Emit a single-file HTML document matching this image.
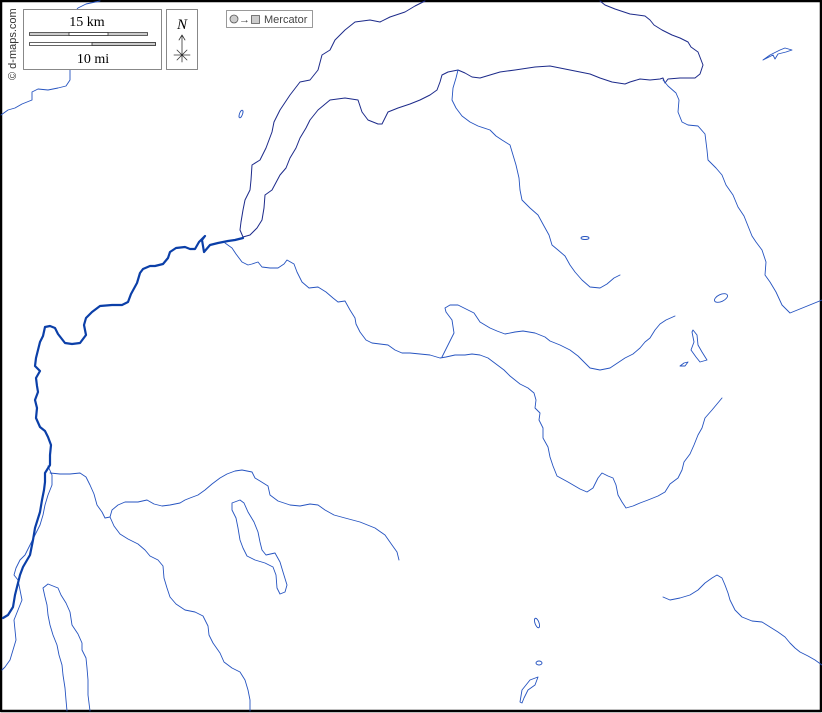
<!DOCTYPE html>
<html><head><meta charset="utf-8"><style>
html,body{margin:0;padding:0;background:#fff}
body{width:822px;height:713px;overflow:hidden;position:relative}
svg{position:absolute;left:0;top:0}
</style></head><body>
<svg width="822" height="713" viewBox="0 0 822 713" xmlns="http://www.w3.org/2000/svg" fill="none" stroke-linejoin="round" stroke-linecap="round">
<rect x="1" y="1" width="820" height="710" fill="#fff" stroke="#000" stroke-width="2.5"/>
<!-- lake outlines -->
<g stroke="#1c2a8a" stroke-width="1">
<path d="M425,1 L415,6 405,12 390,17 380,22 370,20 355,22 345,30 335,40 330,50 322,55 318,70 310,80 300,82 290,95 280,110 274,122 272,132 266,148 260,160 252,165 251,180 250,190 245,200 243,210 241,222 240,230 243,237"/>
<path d="M243,237 L250,235 257,228 262,220 264,208 265,195 272,190 280,175 286,168 290,158 296,148 300,138 306,128 310,120 318,110 330,100 345,98 358,100 362,112 368,120 378,124 382,124 388,112 398,108 410,104 420,100 430,95 437,90 440,82 442,75 448,72 458,70 465,73 472,77 480,78 490,75 500,72 515,70 535,67 550,66 560,68 570,70 580,72 590,74 600,78 612,82 625,84 630,82 640,79 650,80 660,79 663,78 665,83 668,79 680,78 695,78 700,74 703,65 698,52 691,47 688,42 680,38 672,35 662,30 654,25 650,20 645,16 630,14 615,9 605,5 600,1"/>
</g>
<!-- thin rivers -->
<g stroke="#2553c0" stroke-width="0.9">
<path d="M1,115 L8,110 15,108 22,104 32,100 32,92 38,89 48,90 58,88 66,86 70,80 70,68 72,58 70,45 72,35 70,24 72,15 78,8 86,4 100,1"/>
<path d="M663,80 L668,86 676,93 679,100 678,112 682,122 688,125 698,126 705,134 707,150 708,160 716,168 722,175 726,185 733,195 738,207 744,216 748,226 752,236 756,242 762,250 766,262 765,275 770,282 776,292 782,305 790,313 822,300"/>
<path d="M458,70 L456,78 453,88 452,100 456,108 462,116 470,122 478,126 490,130 496,136 502,140 510,145 513,155 516,165 519,178 520,190 522,200 530,208 538,215 544,226 549,235 552,245 558,250 565,256 570,265 575,272 582,280 590,287 600,288 607,284 614,278 620,275"/>
<path d="M225,243 L232,248 236,254 242,262 248,265 252,264 258,262 262,267 270,268 278,268 284,264 287,260 294,264 297,272 302,282 309,288 318,287 326,292 333,298 338,302 345,301 350,310 355,318 356,324 360,332 366,340 372,343 380,344 388,345 395,350 402,353 410,353 420,354 430,355 440,358 446,357 455,355 465,355 472,354 480,355 488,358 496,364 504,370 510,376 515,380 520,384 528,388 534,393 536,400 535,408 540,413 539,420 543,428 543,438 548,447 550,457 553,466 557,476 568,482 580,489 587,492 593,488 598,478 602,473 608,476 613,478 616,485 618,495 622,502 626,508 633,506 640,503 648,500 658,496 665,492 670,484 678,478 682,470 684,462 690,454 694,445 698,435 702,428 705,418 712,410 717,404 722,398"/>
<path d="M442,357 L448,345 454,333 452,320 446,312 445,308 450,305 458,305 466,309 474,313 480,322 490,328 497,331 505,334 515,332 523,331 535,333 545,337 550,341 560,345 570,350 578,356 584,362 590,368 600,370 610,368 616,364 625,358 633,354 640,348 645,342 650,338 655,330 660,324 666,320 675,316"/>
<path d="M50,473 L60,474 70,474 80,473 86,477 90,485 94,494 97,505 102,512 105,518 110,517 112,510 118,505 125,502 130,502 138,502 147,500 154,504 162,506 170,505 180,503 185,500 190,498 198,495 205,490 212,484 220,478 227,474 235,471 242,470 252,472 255,478 260,481 268,486 270,495 278,501 290,505 300,506 310,504 318,505 325,510 334,515 345,518 360,522 375,528 385,535 392,545 397,552 399,560"/>
<path d="M110,517 L114,526 120,534 128,539 138,544 145,550 150,556 158,560 163,566 164,578 167,588 170,597 176,604 185,610 195,612 203,616 208,626 209,635 213,643 220,653 224,662 232,668 240,672 245,680 248,690 250,700 250,711"/>
<path d="M48,466 L52,475 52,485 48,495 45,505 43,515 40,525 35,535 30,545 25,555 20,560 16,568 14,575 18,580 20,590 22,600 18,610 14,620 15,630 16,640 13,650 10,660 5,667 2,670"/>
<path d="M663,597 L670,600 680,598 690,595 698,590 705,583 712,578 717,575 722,578 725,585 728,593 730,600 735,610 742,617 752,621 762,622 770,627 778,632 785,637 790,643 795,648 800,652 808,656 815,660 822,665"/>
<path d="M43,588 L48,584 58,588 61,595 66,603 70,612 72,625 78,634 82,643 82,650 86,658 87,668 88,680 88,695 90,711 M67,711 L66,700 65,688 63,675 62,665 59,655 57,645 53,635 50,625 48,615 47,605 45,597 43,588"/>
<path d="M232,503 L240,500 244,503 248,512 254,522 258,532 260,542 262,550 266,555 275,553 280,562 283,572 287,585 285,592 280,594 277,588 276,575 273,567 265,563 255,560 247,556 243,548 240,540 238,528 236,518 232,510Z"/>
<path d="M520,702 L522,690 530,680 538,677 535,685 528,690 524,698 522,703Z"/>
<ellipse cx="537" cy="623" rx="2" ry="5" transform="rotate(-20 537 623)"/>
<ellipse cx="539" cy="663" rx="3" ry="2"/>
<ellipse cx="721" cy="298" rx="7" ry="3.5" transform="rotate(-25 721 298)"/>
<ellipse cx="585" cy="238" rx="4" ry="1.5"/>
<ellipse cx="241" cy="114" rx="1.5" ry="4" transform="rotate(20 241 114)"/>
<path d="M692,332 L694,342 691,350 696,357 700,362 707,360 702,352 698,345 697,335 693,330Z"/>
<path d="M680,366 L684,363 688,362 685,366Z"/>
<path d="M763,60 L770,55 776,52 780,50 785,48 792,50 786,52 778,54 775,59 773,55 767,58Z"/>
</g>
<!-- main river -->
<path stroke="#0b3fa8" stroke-width="2.2" d="M243,238 L235,240 228,241 218,243 210,245 204,252 202,240 205,236 199,242 195,249 190,249 185,247 176,248 170,252 168,258 163,264 155,266 150,266 143,269 140,273 137,283 131,294 128,302 122,305 112,305 100,306 92,312 86,318 84,325 86,335 80,343 72,344 65,343 58,334 55,328 50,326 45,327 43,336 40,342 38,350 36,358 35,366 40,371 36,378 37,386 38,392 35,400 37,408 36,418 40,427 45,431 48,437 51,445 50,455 50,465 45,473 45,482 44,490 42,500 40,512 35,528 33,540 30,555 23,567 20,575 18,583 15,595 13,607 8,615 3,618"/>
<!-- legend -->
<g font-family="Liberation Serif, serif" fill="#000">
<rect x="23.5" y="9.5" width="138" height="60" fill="#fff" stroke="#888"/>
<text x="87" y="26" font-size="14" text-anchor="middle" stroke="none">15 km</text>
<rect x="29.5" y="32.5" width="118" height="3" fill="#ccc" stroke="#333" stroke-width="0.8"/>
<rect x="69" y="32.5" width="39" height="3" fill="#fff" stroke="#333" stroke-width="0.8"/>
<rect x="29.5" y="42.5" width="126" height="3" fill="#fff" stroke="#333" stroke-width="0.8"/>
<rect x="92" y="42.5" width="63.5" height="3" fill="#ccc" stroke="#333" stroke-width="0.8"/>
<text x="93" y="63" font-size="14" text-anchor="middle" stroke="none">10 mi</text>
<rect x="166.5" y="9.5" width="31" height="60" fill="#fff" stroke="#888"/>
<text x="182" y="29" font-size="15" font-style="italic" text-anchor="middle" stroke="none">N</text>
<path d="M182,53 L182,36 M179,40 L182,35 185,40 M174,55 L190,55 M182,48 L182,62 M177,50 L187,60 M187,50 L177,60" stroke="#333" stroke-width="0.8" fill="none"/>
<rect x="226.5" y="10.5" width="86" height="17" fill="#fff" stroke="#999"/>
<circle cx="234" cy="19" r="4" fill="#ccc" stroke="#555" stroke-width="0.8"/>
<text x="239" y="23" font-size="11" font-family="Liberation Sans, sans-serif" fill="#444">→</text>
<rect x="251.5" y="15.5" width="8" height="8" fill="#ccc" stroke="#555" stroke-width="0.8"/>
<text x="264" y="23" font-size="11" font-family="Liberation Sans, sans-serif" fill="#444">Mercator</text>
<text transform="translate(16,80) rotate(-90)" font-size="11" font-family="Liberation Sans, sans-serif" fill="#333">© d-maps.com</text>
</g>
</svg>
</body></html>
